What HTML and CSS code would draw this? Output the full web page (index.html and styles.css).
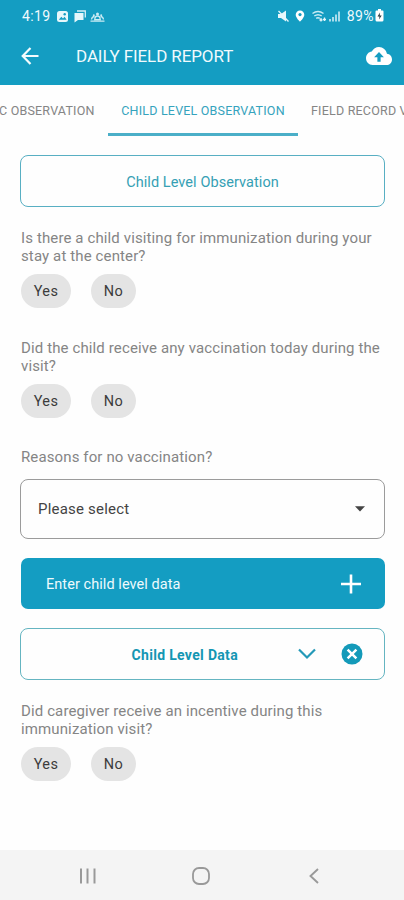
FILE: index.html
```html
<!DOCTYPE html>
<html lang="en">
<head>
<meta charset="utf-8">
<title>Daily Field Report</title>
<link rel="stylesheet" href="styles.css">
</head>
<body>
<header class="top">
  <div class="status">
    <span class="clock">4:19</span>
    <svg class="status-left" width="50" height="14" viewBox="0 0 50 14">
      <rect x="1" y="2" width="11" height="11" rx="2.5" fill="#e6f7fb"/>
      <path d="M2.8 10.8 5.3 7.8 7 9.5 8.6 7.8 10.600 10.800z" fill="#149dc2"/>
      <circle cx="8.700" cy="5.200" r="1.200" fill="#149dc2"/>
      <path d="M21 2h8.300v6.500" fill="none" stroke="#d5f0f7" stroke-width="1.300"/>
      <path d="M18.500 4h9v7H22l-3.500 2.500z" fill="#e6f7fb"/>
      <path d="M34.500 12.200h14M35.500 10.500q.5-3 3-3M44.500 7.500q2.500 0 3 3M38.700 10.700q.3-3.700 2.800-3.700t2.800 3.700z" fill="none" stroke="#c9ebf4" stroke-width="1.300"/>
      <circle cx="41.500" cy="4.900" r="1.500" fill="#c9ebf4"/><circle cx="37.800" cy="6.300" r="1" fill="#c9ebf4"/><circle cx="45.200" cy="6.300" r="1" fill="#c9ebf4"/>
    </svg>
    <svg class="status-right" width="66" height="14" viewBox="0 0 66 14">
      <path d="M1 5h3l5-3.500v11L4 9H1z" fill="#e6f7fb"/>
      <path d="M1.500 2 11.500 12.500" stroke="#e6f7fb" stroke-width="1.300"/>
      <path d="M23 1.500a4.300 4.300 0 0 0-4.300 4.300c0 3 4.300 7 4.300 7s4.300-4 4.300-7A4.300 4.300 0 0 0 23 1.500z" fill="#fff"/>
      <circle cx="23" cy="5.600" r="1.600" fill="#149dc2"/>
      <path d="M35.500 4.500q5.500-4 11 0M37.300 7q3.700-2.700 7.400 0M39.200 9.300q1.800-1.300 3.600 0" fill="none" stroke="#c9ebf4" stroke-width="1.500"/>
      <path d="M44 12.500v-3.500M47.500 8.500v3.500M42.500 11h3M46 10.500h3" stroke="#e6f7fb" stroke-width="1.300"/>
      <path d="M53 10v2.500M56 8v4.500M59 5.500v7M62 2.500v10" stroke="#a9dceb" stroke-width="2"/>
    </svg>
    <span class="percent">89%</span>
    <svg width="9" height="13" viewBox="0 0 9 13">
      <path d="M3 0h3v1.500h1.500q1 0 1 1V11q0 1.500-1.500 1.500H2Q.5 12.500.5 11V2.500q0-1 1-1H3z" fill="#fff"/>
      <path d="M5 3.500 2.500 7.500h2L4 10.500l2.700-4h-2z" fill="#26363c"/>
    </svg>
  </div>
  <div class="bar">
    <svg width="18" height="18" viewBox="0 0 18 18"><path d="M9.500 1 1.700 9l7.800 8M1.700 9H17.500" fill="none" stroke="#f3fbfd" stroke-width="2.200"/></svg>
    <h1>DAILY FIELD REPORT</h1>
    <svg class="cloud" width="26" height="18" viewBox="0 4 24 16" preserveAspectRatio="none"><path d="M19.350 10.040C18.670 6.590 15.640 4 12 4 9.110 4 6.600 5.640 5.350 8.040 2.340 8.360 0 10.910 0 14c0 3.310 2.690 6 6 6h13c2.760 0 5-2.240 5-5 0-2.640-2.050-4.780-4.650-4.960zM13.500 13v4h-3v-4H7.500L12 8.500 16.500 13z" fill="#fff"/></svg>
  </div>
</header>
<nav class="tabs">
  <span class="tab tab-prev">C OBSERVATION</span>
  <span class="tab tab-on">CHILD LEVEL OBSERVATION</span>
  <span class="tab tab-next">FIELD RECORD V</span>
</nav>
<main>
  <div class="section-title">Child Level Observation</div>
  <section class="question">
    <p>Is there a child visiting for immunization during your<br>stay at the center?</p>
    <div class="chips"><button class="yes">Yes</button><button class="no">No</button></div>
  </section>
  <section class="question">
    <p>Did the child receive any vaccination today during the<br>visit?</p>
    <div class="chips"><button class="yes">Yes</button><button class="no">No</button></div>
  </section>
  <p class="reason">Reasons for no vaccination?</p>
  <div class="select"><span>Please select</span><svg width="10" height="6" viewBox="0 0 10 6"><path d="M0 .3h10L5 5.500z" fill="#444"/></svg></div>
  <div class="enter"><span>Enter child level data</span><svg width="20" height="20" viewBox="0 0 20 20"><path d="M10 .5v19M0 10h20" stroke="#fff" stroke-width="2.600"/></svg></div>
  <div class="data-card">
    <span>Child Level Data</span>
    <svg class="chevron" width="18" height="12" viewBox="0 0 18 12"><path d="M1 1.500 9 9.500 17 1.500" fill="none" stroke="#2499b8" stroke-width="2.200"/></svg>
    <svg width="22" height="22" viewBox="0 0 22 22"><circle cx="11" cy="11" r="10.500" fill="#149ab9"/><path d="M6.600 6.600 15.400 15.400M15.400 6.600 6.600 15.400" stroke="#fff" stroke-width="2.500"/></svg>
  </div>
  <section class="question">
    <p>Did caregiver receive an incentive during this<br>immunization visit?</p>
    <div class="chips"><button class="yes">Yes</button><button class="no">No</button></div>
  </section>
</main>
<footer class="system-nav">
  <svg width="18" height="18" viewBox="0 0 18 18"><path d="M2 1.500v15M8.500 1.500v15M15.500 1.500v15" stroke="#999" stroke-width="2"/></svg>
  <svg width="20" height="20" viewBox="0 0 20 20"><rect x="2" y="2" width="16" height="16" rx="6" fill="none" stroke="#999" stroke-width="1.800"/></svg>
  <svg width="12" height="18" viewBox="0 0 12 18"><path d="M10 2 2.500 9 10 16" fill="none" stroke="#999" stroke-width="1.900"/></svg>
</footer>
</body>
</html>
```
FILE: styles.css
```css
* { box-sizing: border-box; }
body {
  margin: 0;
  width: 404px;
  height: 900px;
  display: flex;
  flex-direction: column;
  overflow: hidden;
  background: #fefefe;
  font-family: Roboto, "Liberation Sans", sans-serif;
}
h1, p { margin: 0; font-weight: 400; }
svg { display: block; flex: none; }
.top { height: 85px; background: #149dc2; color: #f0fafd; }
.status { height: 30px; display: flex; align-items: center; padding: 1px 20px 0 22px; }
.clock { width: 34px; font-size: 14px; letter-spacing: 0.4px; white-space: nowrap; }
.status-right { margin-left: auto; }
.percent { font-size: 14px; letter-spacing: 0.4px; margin: 0 1px 0 4px; }
.bar { height: 52px; display: flex; align-items: center; padding: 0 12px 0 21px; }
.bar h1 { margin-left: 37px; font-size: 17px; letter-spacing: -0.1px; white-space: nowrap; }
.cloud { margin-left: auto; }
.tabs { height: 51px; display: flex; overflow: hidden; flex: none; }
.tab { font-size: 12.5px; line-height: 52px; letter-spacing: 0.2px; color: #858585; white-space: nowrap; flex: none; }
.tab-prev { width: 108px; text-indent: -1px; }
.tab-on { width: 190px; text-align: center; color: #35a3bd; border-bottom: 3px solid #4bafc8; }
.tab-next { padding-left: 13px; }
main { flex: 1; padding: 19px 19px 0 20px; }
.section-title {
  height: 52px;
  border: 1px solid #58afc3;
  border-radius: 8px;
  text-align: center;
  line-height: 53px;
  font-size: 14.5px;
  letter-spacing: 0.07px;
  color: #35a0b4;
}
.question { padding-left: 1px; margin-top: 22px; }
.question p, .reason { font-size: 15px; line-height: 18px; letter-spacing: 0.12px; color: #858585; white-space: nowrap; }
.chips { display: flex; gap: 20px; margin-top: 9px; }
.chips button {
  height: 34px;
  padding: 1px 0 0;
  border: 0;
  border-radius: 17px;
  background: #e4e4e4;
  color: #3c3c3c;
  font: 400 14.5px/33px Roboto, sans-serif;
  letter-spacing: 0.4px;
}
.chips .yes { width: 50px; }
.chips .no { width: 45px; }
.question + .question { margin-top: 31px; }
.reason { margin: 30px 0 13px 1px; }
.select {
  height: 60px;
  border: 1px solid #9b9b9b;
  border-radius: 8px;
  display: flex;
  align-items: center;
  justify-content: space-between;
  padding: 0 19px 0 17px;
  font-size: 15px;
  letter-spacing: 0.2px;
  color: #444;
}
.enter {
  height: 51px;
  margin: 19px 0 19px 1px;
  border-radius: 7px;
  background: #149dc2;
  color: #eefafd;
  display: flex;
  align-items: center;
  justify-content: space-between;
  padding: 0 24px 0 25px;
  font-size: 14.5px;
  letter-spacing: 0.06px;
}
.enter span { padding-top: 1px; }
.data-card {
  height: 52px;
  border: 1px solid #65b5c1;
  border-radius: 8px;
  display: flex;
  align-items: center;
  justify-content: flex-end;
  padding-right: 21px;
  color: #1496b3;
  font-size: 14px;
  letter-spacing: 0.32px;
  font-weight: 700;
}
.data-card span { padding-top: 1px; }
.chevron { margin: 0 25px 0 60px; }
.system-nav {
  height: 50px;
  flex: none;
  background: #f4f4f4;
  display: grid;
  grid-template-columns: 113px 113px 113px;
  justify-content: center;
  justify-items: center;
  align-items: center;
  padding: 2px 3px 0 0;
}
```
